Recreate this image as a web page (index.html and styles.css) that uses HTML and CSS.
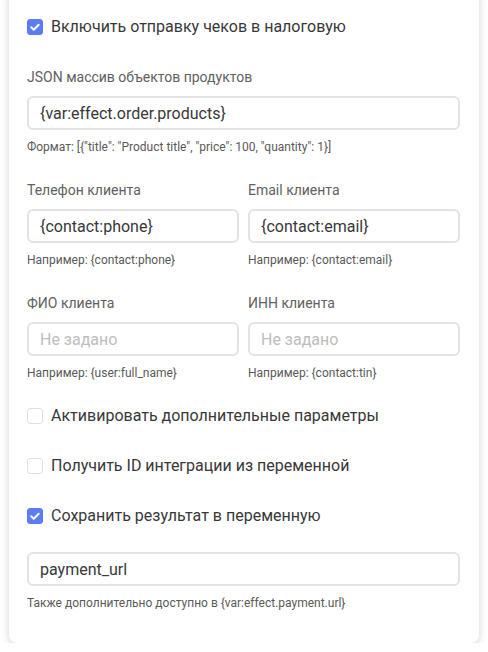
FILE: index.html
```html
<!DOCTYPE html>
<html>
<head>
	<meta charset="utf-8">
	<title>Отправка чеков</title>
	<link rel="stylesheet" href="styles.css">
</head>
<body>
	<div class="card">
		<label class="check first">
			<span class="box on"><svg viewBox="0 0 16 16" width="16" height="16"><path d="M4.2 8.3l2.5 2.4 5-5" fill="none" stroke="#fff" stroke-width="2" stroke-linecap="round" stroke-linejoin="round"/></svg></span>
			Включить отправку чеков в налоговую
		</label>

		<div class="field">
			<div class="label">JSON массив объектов продуктов</div>
			<input class="input" type="text" value="{var:effect.order.products}">
			<div class="hint">Формат: [{"title": "Product title", "price": 100, "quantity": 1}]</div>
		</div>

		<div class="cols">
			<div class="field">
				<div class="label">Телефон клиента</div>
				<input class="input" type="text" value="{contact:phone}">
				<div class="hint">Например: {contact:phone}</div>
			</div>
			<div class="field">
				<div class="label">Email клиента</div>
				<input class="input" type="text" value="{contact:email}">
				<div class="hint">Например: {contact:email}</div>
			</div>
		</div>

		<div class="cols">
			<div class="field">
				<div class="label">ФИО клиента</div>
				<input class="input" type="text" placeholder="Не задано">
				<div class="hint">Например: {user:full_name}</div>
			</div>
			<div class="field">
				<div class="label">ИНН клиента</div>
				<input class="input" type="text" placeholder="Не задано">
				<div class="hint">Например: {contact:tin}</div>
			</div>
		</div>

		<label class="check">
			<span class="box"></span>
			Активировать дополнительные параметры
		</label>
		<label class="check">
			<span class="box"></span>
			Получить ID интеграции из переменной
		</label>
		<label class="check">
			<span class="box on"><svg viewBox="0 0 16 16" width="16" height="16"><path d="M4.2 8.3l2.5 2.4 5-5" fill="none" stroke="#fff" stroke-width="2" stroke-linecap="round" stroke-linejoin="round"/></svg></span>
			Сохранить результат в переменную
		</label>

		<div class="field last">
			<input class="input" type="text" value="payment_url">
			<div class="hint">Также дополнительно доступно в {var:effect.payment.url}</div>
		</div>
	</div>
</body>
</html>
```

FILE: styles.css
```css
body{margin: 0;background: #fff;font-family: Roboto, "Noto Sans", Arial, sans-serif;color: #333;}
.card{
	margin: -10px 9px 0;
	padding: 25px 19px 32px 18px;
	background: #fff;
	border-radius: 8px;
	box-shadow: 0 2px 9px rgba(0,0,0,0.17);
}
/*чекбоксы*/
.check{
	display: flex;
	align-items: center;
	height: 24px;
	font-size: 16px;
	line-height: 24px;
	color: #383838;
	margin-top: 26px;
}
.check.first{margin-top: 0;}
.box{
	flex: none;
	width: 14px;
	height: 14px;
	margin-right: 8px;
	border: 1px solid #e0e0e0;
	border-radius: 3px;
	background: #fff;
	display: flex;
}
.box.on{
	border-color: #5b7cf2;
	background: #5b7cf2;
}
.box svg{margin: -1px;}
/*поля*/
.field{margin-top: 28px;}
.cols{
	display: grid;
	grid-template-columns: 1fr 1fr;
	gap: 9px;
	margin-top: 25px;
}
.cols .field{margin-top: 0;}
.check + .cols, .cols + .check{margin-top: 23px;}
.label{
	font-size: 14px;
	line-height: 20px;
	color: #616161;
	margin-bottom: 9px;
}
.input{
	display: block;
	box-sizing: border-box;
	width: 100%;
	height: 34px;
	margin: 0;
	padding: 0 11px;
	border: 2px solid #e3e3e3;
	border-radius: 6px;
	font-family: inherit;
	font-size: 16px;
	color: #383838;
	background: #fff;
	outline: none;
}
.input::placeholder{color: #bdbdbd;}
.hint{
	font-size: 12px;
	line-height: 16px;
	color: #5a5a5a;
	margin-top: 9px;
}
.field.last{margin-top: 24px;}
```
